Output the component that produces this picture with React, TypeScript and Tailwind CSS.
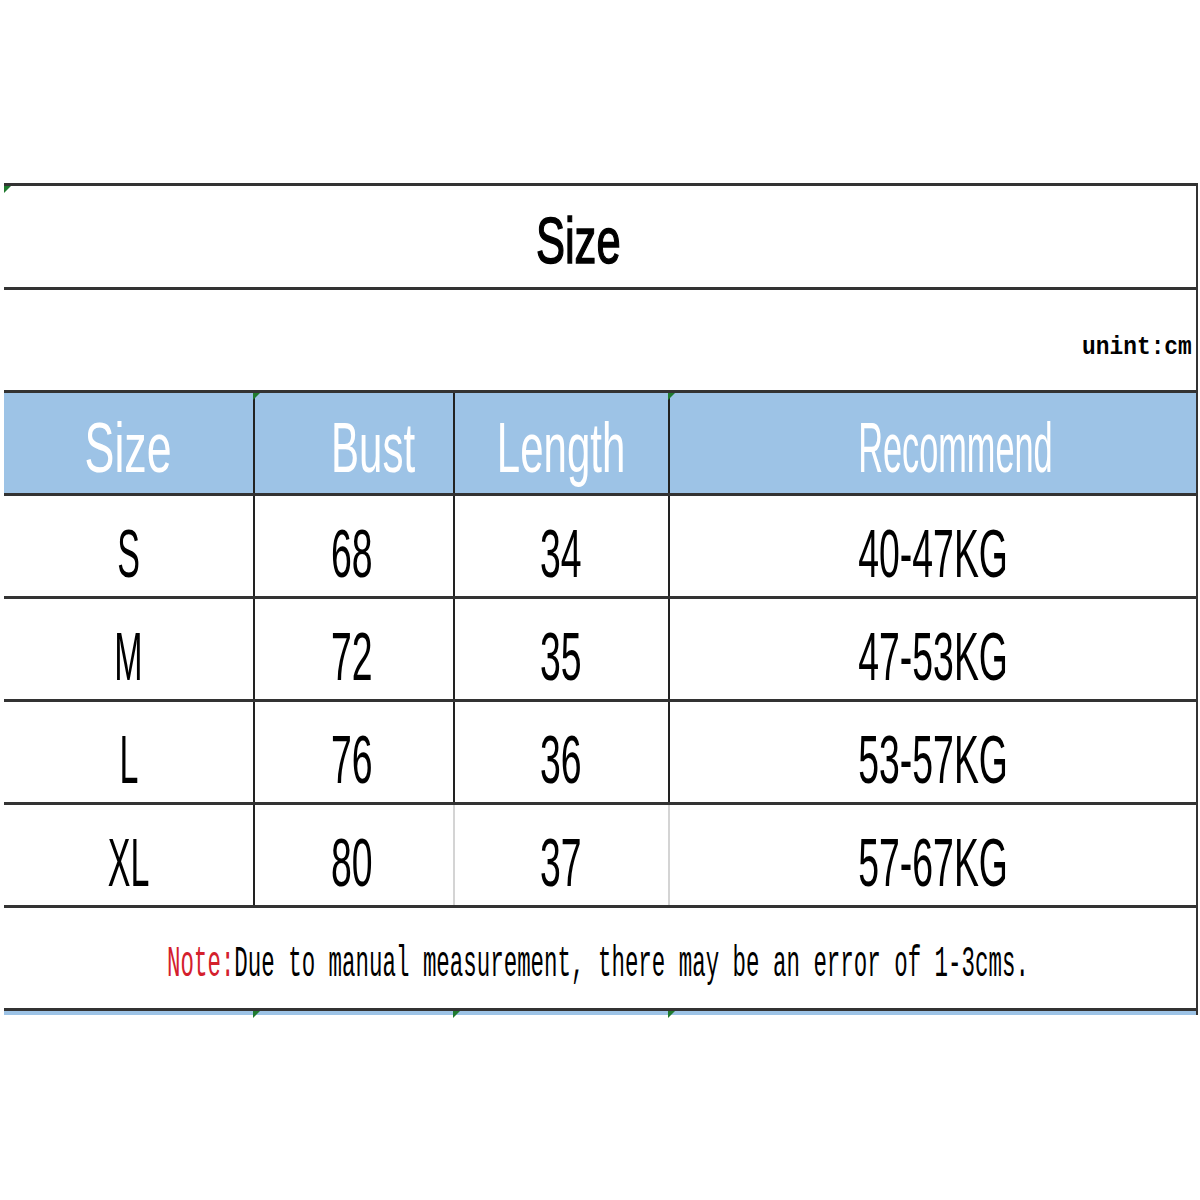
import React from "react";

const rows = [
  { size: "S", bust: "68", length: "34", rec: "40-47KG" },
  { size: "M", bust: "72", length: "35", rec: "47-53KG" },
  { size: "L", bust: "76", length: "36", rec: "53-57KG" },
  { size: "XL", bust: "80", length: "37", rec: "57-67KG" },
];

const Narrow = ({ children, className = "" }: { children: React.ReactNode; className?: string }) => (
  <span
    className={`inline-block whitespace-nowrap leading-none ${className}`}
    style={{ fontFamily: '"Liberation Sans", Arial, sans-serif' }}
  >
    {children}
  </span>
);

const Marker = ({ className }: { className: string }) => (
  <span
    className={`absolute w-0 h-0 border-t-[7px] border-r-[7px] border-t-[#1f7a2e] border-r-transparent ${className}`}
  />
);

const App = () => {
  return (
    <div className="w-[1200px] h-[1200px] bg-white pt-[183px] pl-[4px] pr-[2px]">
      <div className="relative border-r-2 border-[#333]">
        <Marker className="left-0 top-[3px]" />

        {/* Title */}
        <div className="h-[104px] border-t-[3px] border-[#333] flex items-center justify-center pr-[44px] pt-[8px]">
          <Narrow className="scale-x-[0.68] text-[64px] text-black [-webkit-text-stroke:1.5px_black]">Size</Narrow>
        </div>

        {/* Unit */}
        <div className="h-[103px] border-t-[3px] border-[#333] flex items-center justify-end pr-[4px] pt-[14px]">
          <span
            className="inline-block origin-right scale-x-[0.88] text-[26px] font-bold text-black leading-none"
            style={{ fontFamily: '"Liberation Mono", "DejaVu Sans Mono", monospace' }}
          >
            unint:cm
          </span>
        </div>

        {/* Header */}
        <div className="relative h-[103px] border-t-[3px] border-[#333] bg-[#9dc3e6] grid grid-cols-[249px_200px_215px_1fr] text-white">
          <Marker className="left-[249px] top-0" />
          <Marker className="left-[664px] top-0" />
          <div className="flex items-center justify-center pt-[10px]">
            <Narrow className="scale-x-[0.64] text-[70px]">Size</Narrow>
          </div>
          <div className="flex items-center justify-center border-l-2 border-[#222] pt-[10px] pl-[38px]">
            <Narrow className="scale-x-[0.6] text-[70px]">Bust</Narrow>
          </div>
          <div className="flex items-center justify-center border-l-2 border-[#222] pt-[10px]">
            <Narrow className="scale-x-[0.6] text-[70px]">Length</Narrow>
          </div>
          <div className="flex items-center justify-center border-l-2 border-[#222] pt-[10px] pl-[44px]">
            <Narrow className="scale-x-[0.49] text-[70px]">Recommend</Narrow>
          </div>
        </div>

        {/* Data rows */}
        {rows.map((r, i) => {
          const last = i === rows.length - 1;
          const inner = last ? "border-[#d4d4d4]" : "border-[#222]";
          return (
            <div
              key={r.size}
              className="h-[103px] border-t-[3px] border-[#333] grid grid-cols-[249px_200px_215px_1fr] text-black"
            >
              <div className="flex items-center justify-center pt-[14px]">
                <Narrow className="scale-x-[0.5] text-[68px]">{r.size}</Narrow>
              </div>
              <div className="flex items-center justify-center border-l-2 border-[#222] pt-[14px] pr-[5px]">
                <Narrow className="scale-x-[0.55] text-[68px]">{r.bust}</Narrow>
              </div>
              <div className={`flex items-center justify-center border-l-2 ${inner} pt-[14px] pr-[2px]`}>
                <Narrow className="scale-x-[0.55] text-[68px]">{r.length}</Narrow>
              </div>
              <div className={`flex items-center justify-center border-l-2 ${inner} pt-[14px]`}>
                <Narrow className="scale-x-[0.55] text-[68px]">{r.rec}</Narrow>
              </div>
            </div>
          );
        })}

        {/* Note */}
        <div className="h-[103px] border-t-[3px] border-[#333] flex items-center justify-center pt-[12px] pr-[4px]">
          <span
            className="inline-block scale-x-[0.51] whitespace-nowrap text-[44px] leading-none text-black"
            style={{ fontFamily: '"Liberation Mono", "DejaVu Sans Mono", monospace' }}
          >
            <span className="text-[#d4202c]">Note:</span>Due to manual measurement, there may be an error of 1-3cms.
          </span>
        </div>

        {/* Bottom strip */}
        <div className="relative h-[7px] border-t-[3px] border-[#333] bg-[#9dc3e6]">
          <Marker className="left-[249px] top-0" />
          <Marker className="left-[449px] top-0" />
          <Marker className="left-[664px] top-0" />
        </div>
      </div>
    </div>
  );
};

export default App;
